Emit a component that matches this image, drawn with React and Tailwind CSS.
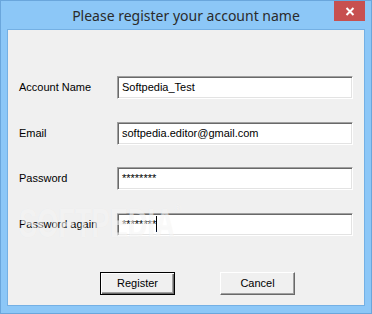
import React from "react";

const inputCls =
  "h-[23px] w-[236px] bg-white border border-t-[#a0a0a0] border-l-[#a0a0a0] border-b-white border-r-white shadow-[inset_1px_1px_#696969,inset_-1px_-1px_#e3e3e3] pl-[4px] flex items-center text-[11px] text-black";

function Row({ label, children }) {
  return (
    <>
      <div className="h-[23px] flex items-center text-[11px] text-black">{label}</div>
      <div className={inputCls}>{children}</div>
    </>
  );
}

export default function App() {
  return (
    <div
      className="relative w-[372px] h-[314px] bg-[#8cc7f7] border border-[#6aa6dc] flex flex-col overflow-hidden"
      style={{ fontFamily: '"Liberation Sans", Arial, sans-serif' }}
    >
      <div className="h-[28px] flex items-center justify-center">
        <span
          className="text-[14px] text-[#2b2b2b] mt-[1px]"
          style={{ fontFamily: '"Noto Sans", "Open Sans", sans-serif' }}
        >
          Please register your account name
        </span>
      </div>
      <div className="absolute top-0 right-[6px] w-[31px] h-[20px] bg-[#c75050] flex items-center justify-center">
        <svg width="10" height="9" viewBox="0 0 10 9">
          <path d="M1.5 1 L8.5 8 M8.5 1 L1.5 8" stroke="white" strokeWidth="2" />
        </svg>
      </div>
      <div className="relative mx-[6px] h-[277px] border border-[#74b0e4] bg-[#f0f0f0] flex flex-col">
        <div className="grid grid-cols-[98px_236px] gap-y-[22.5px] pl-[11px] pt-[46px]">
          <Row label="Account Name">Softpedia_Test</Row>
          <Row label="Email">softpedia.editor@gmail.com</Row>
          <Row label="Password">
            <span className="self-start mt-[2px]">********</span>
          </Row>
          <Row label="Password again">
            <span className="self-start mt-[2px]">********</span>
            <span className="w-[1px] h-[16px] bg-black" />
          </Row>
        </div>
        <div className="flex pl-[92px] gap-[45px] mt-[36px]">
          <div className="w-[75px] h-[23px] border border-black flex">
            <div className="flex-1 bg-[#f0f0f0] shadow-[inset_1px_1px_#fff,inset_-1px_-1px_#696969,inset_-2px_-2px_#a0a0a0] flex items-center justify-center text-[11px] text-black">
              Register
            </div>
          </div>
          <div className="w-[75px] h-[23px] bg-[#f0f0f0] border border-t-[#fff] border-l-[#fff] border-b-[#696969] border-r-[#696969] shadow-[inset_-1px_-1px_#a0a0a0,inset_1px_1px_#f0f0f0] flex items-center justify-center text-[11px] text-black">
            Cancel
          </div>
        </div>
        <div
          className="pointer-events-none absolute left-[11px] top-[173px] origin-left scale-x-[0.68] text-[40px] font-bold text-white/55 leading-none whitespace-nowrap"
          style={{ fontFamily: '"Liberation Sans", Arial, sans-serif', textShadow: "0 0 1px rgba(0,0,0,0.06)" }}
        >
          SOFTPEDIA<span className="text-[12px] align-top">®</span>
        </div>
      </div>
    </div>
  );
}
